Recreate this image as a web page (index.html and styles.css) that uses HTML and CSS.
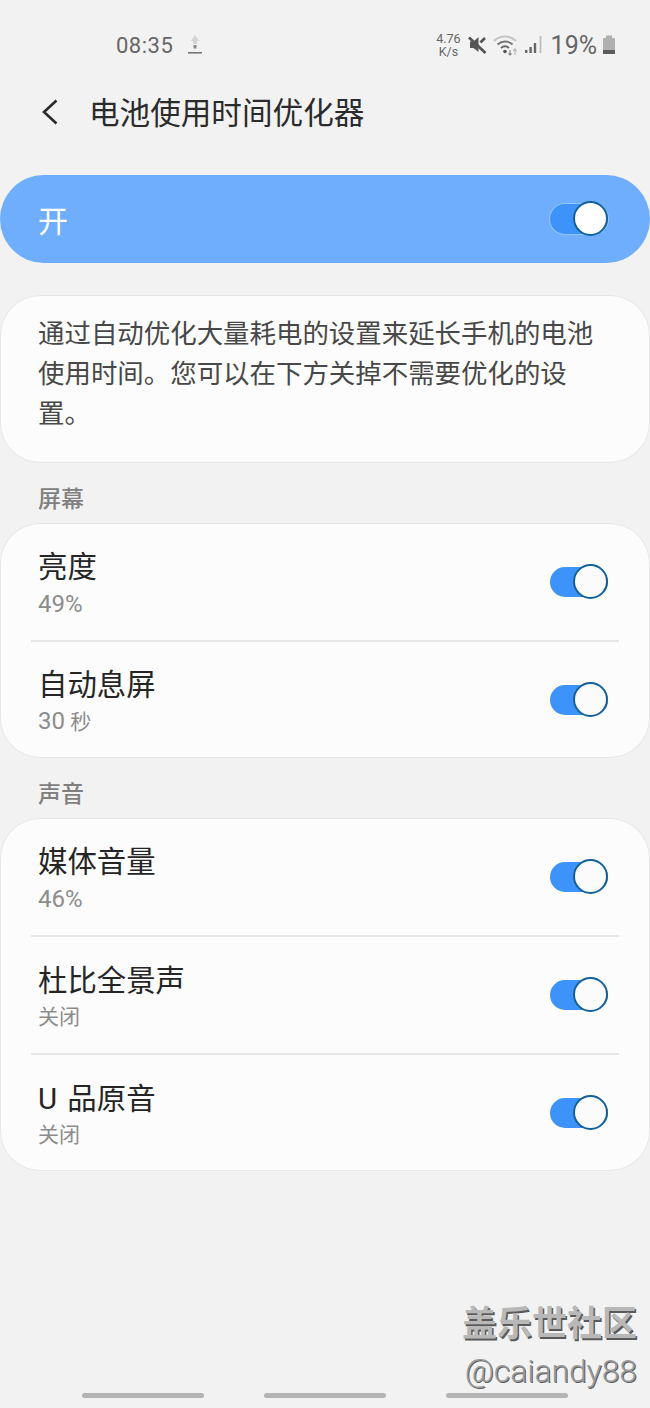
FILE: index.html
```html
<!DOCTYPE html>
<html lang="zh-CN">
<head>
    <meta charset="UTF-8">
    <meta name="viewport" content="width=device-width, initial-scale=1.0">
    <title>电池使用时间优化器</title>
    <link rel="stylesheet" href="styles.css">
</head>
<body>
    <!-- Status bar -->
    <div class="status-bar">
        <div class="status-left">
            <span class="status-time">08:35</span>
            <svg class="icon-upload" width="16" height="20" viewBox="0 0 16 20">
                <path d="M8 0.5 L12.5 6 H10 V9 H6 V6 H3.5 Z" fill="#d4d4d4"/>
                <rect x="6.5" y="10" width="3" height="3.5" fill="#8a8a8a"/>
                <rect x="1" y="17" width="14" height="1.6" fill="#777"/>
            </svg>
        </div>
        <div class="status-right">
            <span class="net-speed">4.76<br>K/s</span>
            <svg class="icon-mute" width="20" height="20" viewBox="0 0 20 20">
                <path d="M3 6.5 H6.5 L11.5 2 V17 L6.5 13 H3 Z" fill="#555"/>
                <path d="M13.5 7.5 L18 3 M2 2.5 L18.5 18" stroke="#555" stroke-width="2.8" fill="none"/>
            </svg>
            <svg class="icon-wifi" width="26" height="22" viewBox="0 0 26 22">
                <path d="M1 7 C7 1 17 1 23 7" stroke="#c4c4c4" stroke-width="1.8" fill="none"/>
                <path d="M4.5 10.5 C9 6.5 15 6.5 19.5 10.5" stroke="#777" stroke-width="1.8" fill="none"/>
                <path d="M8 14 C10.5 11.8 13.5 11.8 16 14" stroke="#666" stroke-width="1.8" fill="none"/>
                <circle cx="12" cy="17.5" r="1.8" fill="#555"/>
                <path d="M17 16 V21 M15.5 19.5 L17 21 L18.5 19.5" stroke="#888" stroke-width="1.2" fill="none"/>
                <path d="M22 21 V15 M20.3 17 L22 15 L23.7 17" stroke="#bbb" stroke-width="1.3" fill="none"/>
            </svg>
            <svg class="icon-signal" width="17" height="20" viewBox="0 0 17 20">
                <rect x="0" y="15" width="2.4" height="3" fill="#666"/>
                <rect x="4.4" y="12" width="2.4" height="6" fill="#666"/>
                <rect x="8.8" y="8" width="2.4" height="10" fill="#666"/>
                <rect x="14.6" y="1" width="1.8" height="17" fill="#bcbcbc"/>
            </svg>
            <span class="battery-text">19%</span>
            <svg class="icon-battery" width="14" height="20" viewBox="0 0 14 20">
                <rect x="4" y="0.5" width="6" height="2.5" fill="#b0b0b0"/>
                <rect x="1" y="3" width="12" height="16" rx="1" fill="#b0b0b0"/>
                <rect x="1" y="15" width="12" height="4" fill="#5c5c5c"/>
            </svg>
        </div>
    </div>

    <!-- Header -->
    <div class="page-header">
        <svg class="icon-back" width="18" height="26" viewBox="0 0 18 26">
            <path d="M15.5 1.5 L3 13 L15.5 24.5" stroke="#2a2a2a" stroke-width="2.6" fill="none"/>
        </svg>
        <h1 class="page-title">电池使用时间优化器</h1>
    </div>

    <!-- Master switch -->
    <div class="master-bar">
        <span class="master-label">开</span>
        <span class="switch switch-master"><span class="knob"></span></span>
    </div>

    <div class="card desc-card">通过自动优化大量耗电的设置来延长手机的电池使用时间。您可以在下方关掉不需要优化的设置。</div>

    <div class="section-label">屏幕</div>
    <div class="card">
        <div class="row">
            <div class="row-text">
                <div class="row-title">亮度</div>
                <div class="row-sub"><span class="num">49%</span></div>
            </div>
            <span class="switch"><span class="knob"></span></span>
        </div>
        <div class="row">
            <div class="row-text">
                <div class="row-title">自动息屏</div>
                <div class="row-sub"><span class="num">30</span> 秒</div>
            </div>
            <span class="switch"><span class="knob"></span></span>
        </div>
    </div>

    <div class="section-label">声音</div>
    <div class="card">
        <div class="row">
            <div class="row-text">
                <div class="row-title">媒体音量</div>
                <div class="row-sub"><span class="num">46%</span></div>
            </div>
            <span class="switch"><span class="knob"></span></span>
        </div>
        <div class="row">
            <div class="row-text">
                <div class="row-title">杜比全景声</div>
                <div class="row-sub">关闭</div>
            </div>
            <span class="switch"><span class="knob"></span></span>
        </div>
        <div class="row">
            <div class="row-text">
                <div class="row-title row-title-spaced">U 品原音</div>
                <div class="row-sub">关闭</div>
            </div>
            <span class="switch"><span class="knob"></span></span>
        </div>
    </div>

    <!-- Gesture bars -->
    <div class="gesture-bars">
        <span class="gesture-bar"></span>
        <span class="gesture-bar"></span>
        <span class="gesture-bar"></span>
    </div>

    <!-- Forum watermark -->
    <div class="watermark">
        <div class="watermark-name">盖乐世社区</div>
        <div class="watermark-user">@caiandy88</div>
    </div>
</body>
</html>
```

FILE: styles.css
```css
/* Global styles */
html, body {
    margin: 0;
    padding: 0;
}

body {
    position: relative;
    width: 650px;
    height: 1408px;
    overflow: hidden;
    display: flex;
    flex-direction: column;
    background-color: #f2f2f2;
    font-family: Roboto, "Noto Sans CJK SC", sans-serif;
    color: #252525;
}

/* Status bar */
.status-bar {
    height: 90px;
    padding: 0 34px 0 116px;
    display: flex;
    justify-content: space-between;
    align-items: center;
    color: #666;
}

.status-left, .status-right {
    display: flex;
    align-items: center;
}

.status-time {
    font-size: 22px;
    letter-spacing: 0.5px;
}

.icon-upload {
    margin-left: 14px;
}

.net-speed {
    font-size: 12.5px;
    line-height: 13px;
    text-align: center;
    margin-right: 6px;
}

.icon-mute {
    margin-right: 6px;
}

.icon-wifi {
    margin-right: 6px;
}

.battery-text {
    font-size: 25px;
    margin-left: 9px;
    margin-right: 5px;
}

/* Header */
.page-header {
    height: 41px;
    display: flex;
    align-items: center;
    padding-left: 41px;
    margin-bottom: 44px;
}

.icon-back {
    margin-top: 3px;
    margin-right: 30px;
}

.page-title {
    margin: 0;
    font-size: 30.6px;
    font-weight: 400;
    color: #2b2b2b;
}

/* Master switch bar */
.master-bar {
    height: 88px;
    border-radius: 44px;
    background-color: #6eaefd;
    padding: 0 42px 0 38px;
    display: flex;
    justify-content: space-between;
    align-items: center;
    margin-bottom: 32px;
}

.master-label {
    font-size: 30px;
    color: #fff;
}

/* Cards */
.card {
    background-color: #fcfcfc;
    border-radius: 40px;
    box-shadow: 0 0 0 1px #e6e6e6 inset;
}

.desc-card {
    height: 168px;
    box-sizing: border-box;
    padding: 19px 38px 0;
    font-size: 26.45px;
    line-height: 40px;
    color: #484848;
}

.section-label {
    height: 60px;
    box-sizing: border-box;
    padding: 21px 0 0 38px;
    font-size: 23px;
    line-height: 32px;
    font-weight: 500;
    color: #808080;
}

.row {
    position: relative;
    height: 117px;
    padding: 0 42px 0 38px;
    display: flex;
    justify-content: space-between;
    align-items: center;
}

.row + .row {
    border-top: 2px solid #e6e6e6;
    margin: 0 31px;
    padding: 0 11px 0 7px;
    height: 116px;
}

.row-text {
    padding-top: 4px;
}

.row + .row .row-text {
    padding-top: 2px;
}

.row-title {
    font-size: 29.4px;
    line-height: 40px;
    color: #252525;
}

.row-title-spaced {
    word-spacing: 3px;
}

.row-sub {
    font-size: 21px;
    line-height: 30px;
    margin-top: 2px;
    color: #8c8c8c;
}

.row + .row .row-sub {
    margin-top: 1px;
}

.num {
    font-size: 24px;
}

/* Toggle switch */
.switch {
    position: relative;
    display: block;
    width: 58px;
    height: 30px;
    margin-top: -1px;
    border-radius: 15px;
    background-color: #3e93fb;
}

.row:first-child .switch {
    margin-top: 0;
}

.knob {
    position: absolute;
    right: 0;
    top: -3px;
    width: 31px;
    height: 31px;
    border: 2px solid #11619f;
    border-radius: 50%;
    background-color: #fbfbfb;
}

.switch-master {
    box-shadow: 0 0 0 1px #93c3fd;
}

.switch-master .knob {
    background-color: #fff;
}

/* Gesture bars */
.gesture-bars {
    margin-top: auto;
    height: 15px;
    display: flex;
    justify-content: flex-start;
    gap: 60px;
    padding-left: 82px;
}

.gesture-bar {
    width: 122px;
    height: 5px;
    border-radius: 3px;
    background-color: #b4b4b4;
}

/* Watermark over the page */
.watermark {
    position: absolute;
    right: 13px;
    top: 1301px;
    text-align: right;
}

.watermark-name {
    font-size: 35px;
    line-height: 48px;
    font-weight: 700;
    color: #b8b8b8;
    text-shadow: 1.5px 1.5px 0 #5a5a5a;
}

.watermark-user {
    font-size: 31.8px;
    line-height: 44px;
    font-weight: 300;
    color: #9a9a9a;
    text-shadow: 1px 1px 0 #5f5f5f;
}
```
